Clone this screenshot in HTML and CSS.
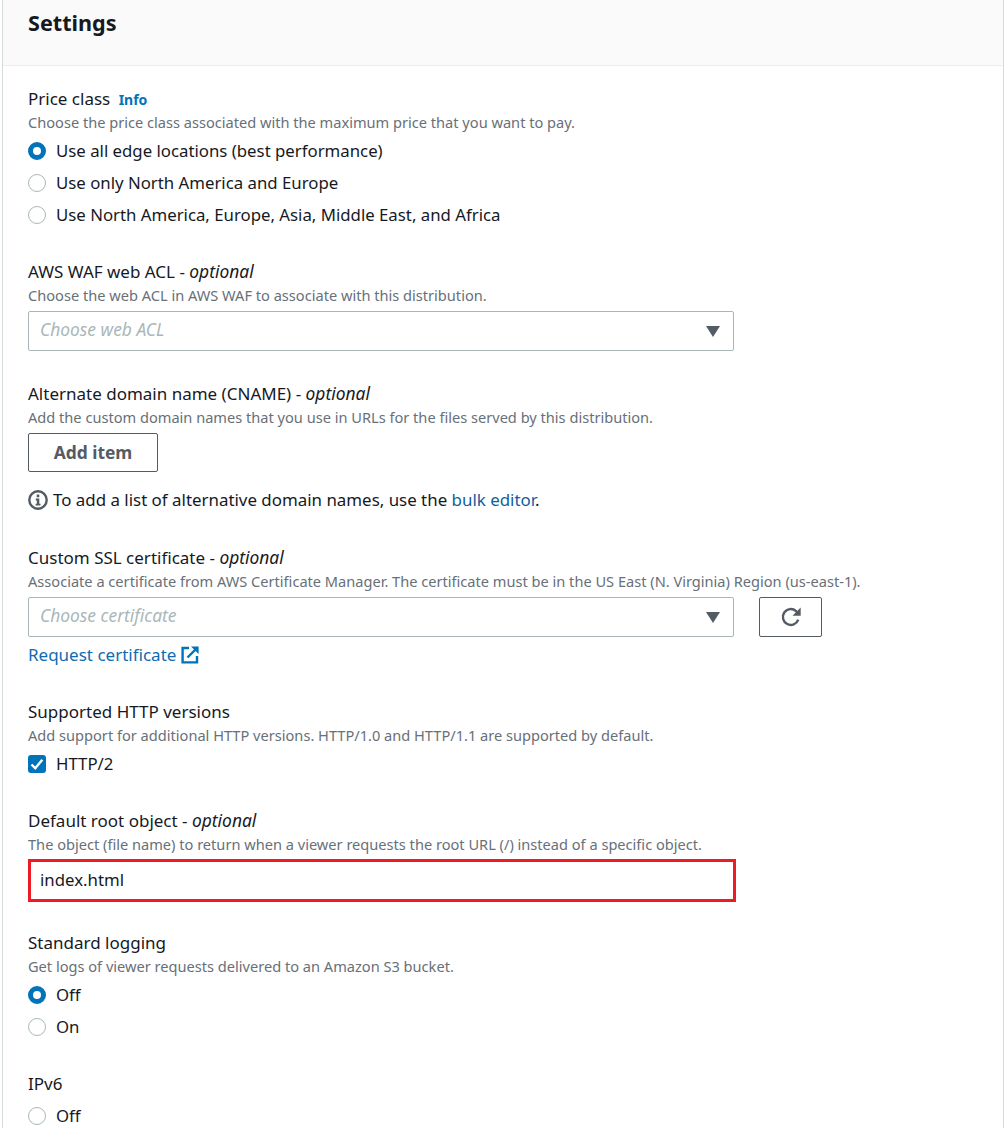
FILE: index.html
```html
<!DOCTYPE html>
<html lang="en">
  <head>
    <meta charset="UTF-8" />
    <meta name="viewport" content="width=device-width, initial-scale=1.0" />
    <title>Settings</title>
    <link rel="stylesheet" href="styles.css">
  </head>
  <body>
    <div class="panel">
      <div class="panel-header">
        <h2>Settings</h2>
      </div>
      <form class="panel-body">
        <div class="field">
          <div class="label">Price class <a class="info" href="#">Info</a></div>
          <div class="desc">Choose the price class associated with the maximum price that you want to pay.</div>
          <div class="options">
            <div class="option"><span class="radio checked"></span>Use all edge locations (best performance)</div>
            <div class="option"><span class="radio"></span>Use only North America and Europe</div>
            <div class="option"><span class="radio"></span>Use North America, Europe, Asia, Middle East, and Africa</div>
          </div>
        </div>

        <div class="field field-waf">
          <div class="label">AWS WAF web ACL - <em>optional</em></div>
          <div class="desc">Choose the web ACL in AWS WAF to associate with this distribution.</div>
          <div class="select">
            <span>Choose web ACL</span>
            <svg viewBox="0 0 16 16"><path d="M1 3h14L8 14z" /></svg>
          </div>
        </div>

        <div class="field field-cname">
          <div class="label">Alternate domain name (CNAME) - <em>optional</em></div>
          <div class="desc">Add the custom domain names that you use in URLs for the files served by this distribution.</div>
          <button type="button" class="btn">Add item</button>
          <div class="hint">
            <svg viewBox="0 0 20 20">
              <circle cx="10" cy="10" r="8.7" fill="none" stroke="#545b64" stroke-width="2.4" />
              <path fill="#545b64" d="M8.7 4.6h2.6v2.6H8.7zM7.8 8.6h3.5v5.2h1.2v1.8H7.6v-1.8h1.2v-3.4h-1z" />
            </svg>
            <span>To add a list of alternative domain names, use the <a href="#">bulk editor</a>.</span>
          </div>
        </div>

        <div class="field field-cert">
          <div class="label">Custom SSL certificate - <em>optional</em></div>
          <div class="desc">Associate a certificate from AWS Certificate Manager. The certificate must be in the US East (N. Virginia) Region (us-east-1).</div>
          <div class="select-row">
            <div class="select">
              <span>Choose certificate</span>
              <svg viewBox="0 0 16 16"><path d="M1 3h14L8 14z" /></svg>
            </div>
            <button type="button" class="btn btn-icon" aria-label="Refresh">
              <svg viewBox="0 0 20 20" fill="none" stroke="#545b64" stroke-width="2.2">
                <path d="M16.6 12.4A7.2 7.2 0 1 1 14.6 4.6L17 7" />
                <path fill="#545b64" stroke="none" d="M18.8 1.4v7.4h-7.4z" />
              </svg>
            </button>
          </div>
          <a class="link" href="#">Request certificate
            <svg viewBox="0 0 18 18" fill="none" stroke="#0073bb" stroke-width="2.4">
              <path d="M8 2H1.6v14.4H16V10" />
              <path d="M6.5 11.5L15.5 2.5" />
              <path fill="#0073bb" stroke="none" d="M10 0.4h7.6V8z" />
            </svg>
          </a>
        </div>

        <div class="field">
          <div class="label">Supported HTTP versions</div>
          <div class="desc">Add support for additional HTTP versions. HTTP/1.0 and HTTP/1.1 are supported by default.</div>
          <div class="options">
            <div class="option">
              <span class="checkbox">
                <svg viewBox="0 0 18 18" fill="none" stroke="#fff" stroke-width="2.4"><path d="M3.5 9.5l3.8 3.8 7-8.6" /></svg>
              </span>HTTP/2
            </div>
          </div>
        </div>

        <div class="field">
          <div class="label">Default root object - <em>optional</em></div>
          <div class="desc">The object (file name) to return when a viewer requests the root URL (/) instead of a specific object.</div>
          <div class="text-input">index.html</div>
        </div>

        <div class="field">
          <div class="label">Standard logging</div>
          <div class="desc">Get logs of viewer requests delivered to an Amazon S3 bucket.</div>
          <div class="options">
            <div class="option"><span class="radio checked"></span>Off</div>
            <div class="option"><span class="radio"></span>On</div>
          </div>
        </div>

        <div class="field">
          <div class="label">IPv6</div>
          <div class="options options-nodesc">
            <div class="option"><span class="radio"></span>Off</div>
          </div>
        </div>
      </form>
    </div>
  </body>
</html>
```

FILE: styles.css
```css
html,
body {
  height: 100%;
}

body {
  margin: 0;
  height: 1128px;
  overflow: hidden;
  background-color: white;
  color: #16191f;
  font-family: "Noto Sans", "Open Sans", sans-serif;
  font-size: 16.8px;
  line-height: 22px;
}

a {
  color: #0f5f9e;
  text-decoration: none;
}

/* Panel */

.panel {
  margin: 0 3px 0 2px;
  border-left: 1px solid #d5dbdb;
  border-right: 1px solid #d5dbdb;
}

.panel-header {
  height: 66px;
  box-sizing: border-box;
  padding: 8px 25px 0;
  background-color: #fafafa;
  border-bottom: 1px solid #eaeded;
}

.panel-header h2 {
  margin: 0;
  font-size: 21.6px;
  line-height: 30px;
  font-weight: 700;
}

.panel-body {
  display: flex;
  flex-direction: column;
  gap: 30px;
  padding: 22px 25px 0;
}

/* Fields */

.label {
  height: 22px;
  font-size: 17px;
}

.label em {
  font-size: 17.4px;
  line-height: 1;
  font-style: italic;
}

.info {
  margin-left: 4px;
  color: #0073bb;
  font-size: 14px;
  font-weight: 700;
}

.desc {
  margin-top: 2px;
  padding-bottom: 1px;
  color: #687078;
  font-size: 14.6px;
  line-height: 20px;
}

.options {
  margin-top: 2px;
}

.options-nodesc {
  margin-top: 5px;
}

.option {
  display: flex;
  align-items: center;
  height: 32px;
}

.radio {
  flex: none;
  box-sizing: border-box;
  width: 18px;
  height: 18px;
  margin-right: 10px;
  border: 1.5px solid #aab7b8;
  border-radius: 50%;
  background-color: white;
}

.radio.checked {
  border: 5px solid #0073bb;
}

.checkbox {
  flex: none;
  display: flex;
  width: 18px;
  height: 18px;
  margin-right: 10px;
  border-radius: 3px;
  background-color: #0073bb;
}

/* Inputs */

.select {
  display: flex;
  align-items: center;
  justify-content: space-between;
  box-sizing: border-box;
  width: 706px;
  height: 40px;
  margin-top: 5px;
  padding: 0 12px 0 11px;
  border: 1px solid #aab7b8;
  border-radius: 2px;
  color: #aab7b8;
  font-size: 17.4px;
  font-style: italic;
}

.select span {
  margin-top: -4px;
}

.select svg {
  width: 16px;
  height: 16px;
  fill: #545b64;
}

.select-row {
  display: flex;
  align-items: flex-end;
  gap: 25px;
}

.text-input {
  box-sizing: border-box;
  width: 708px;
  height: 43px;
  margin-top: 4px;
  padding: 0 9px;
  border: 3px solid #ed1c24;
  line-height: 35px;
}

.btn {
  display: block;
  box-sizing: border-box;
  width: 130px;
  height: 39px;
  margin-top: 5px;
  padding: 0 0 2px;
  border: 1px solid #545b64;
  border-radius: 2px;
  background-color: white;
  color: #545b64;
  font: inherit;
  font-size: 17.4px;
  font-weight: 700;
}

.btn-icon {
  display: flex;
  align-items: center;
  justify-content: center;
  width: 63px;
  height: 40px;
  margin-top: 0;
  padding: 0;
}

.btn-icon svg {
  width: 22px;
  height: 22px;
}

.hint {
  display: flex;
  align-items: center;
  gap: 5px;
  margin-top: 17px;
  font-size: 16.9px;
}

.hint svg {
  flex: none;
  width: 20px;
  height: 20px;
}

.field-waf {
  margin-bottom: 2px;
}

.field-cname {
  margin-bottom: 6px;
}

.field-cert {
  margin-bottom: 5px;
}

.link {
  display: flex;
  align-items: center;
  gap: 5px;
  margin-top: 7px;
  color: #0f6cb0;
  font-size: 17px;
}

.link svg {
  width: 18px;
  height: 18px;
}
```
